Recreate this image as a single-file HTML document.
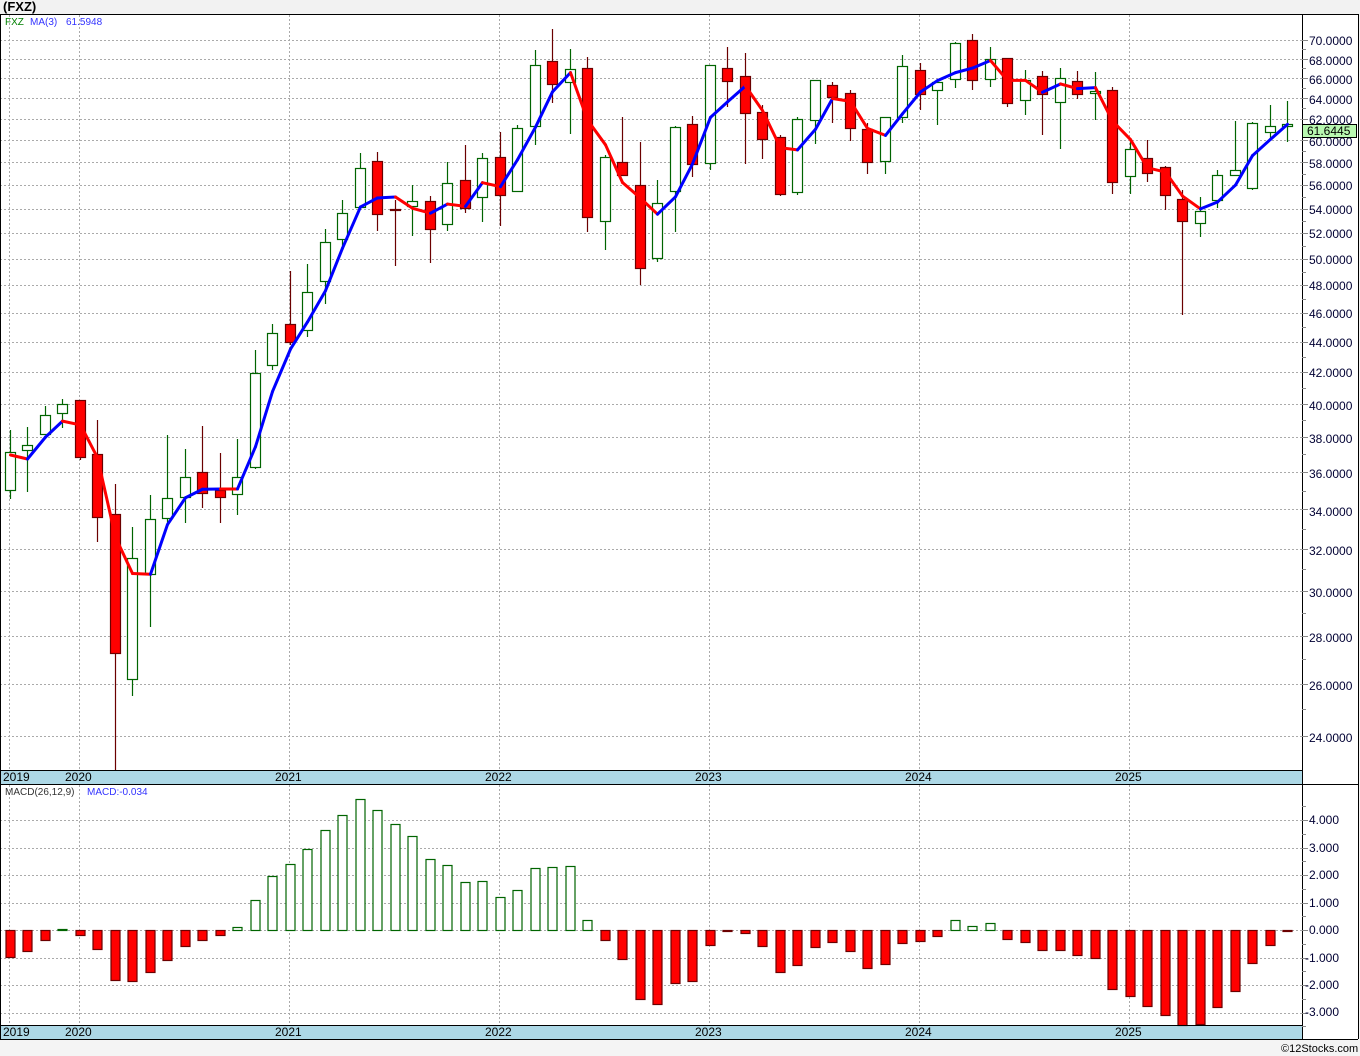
<!DOCTYPE html>
<html><head><meta charset="utf-8"><style>
html,body{margin:0;padding:0;}
body{width:1360px;height:1056px;overflow:hidden;background:#f4f4f4;font-family:"Liberation Sans","DejaVu Sans",sans-serif;}
svg{position:absolute;left:0;top:0;}
</style></head><body>
<svg id="s" width="1360" height="1056" xmlns="http://www.w3.org/2000/svg" font-family="Liberation Sans, DejaVu Sans, sans-serif">
<rect x="0" y="0" width="1360" height="14" fill="#f2f2f2"/>
<rect x="0" y="14" width="1358" height="1025" fill="#ffffff"/>
<g id="grid"></g>
<rect x="0" y="770" width="1302" height="14" fill="#add8e6"/>
<rect x="0" y="1025" width="1302" height="14" fill="#add8e6"/>
<g id="candles"></g>
<g id="ma"></g>
<g id="macd"></g>
<line x1="0" y1="14.5" x2="1358" y2="14.5" stroke="#000"/>
<line x1="0" y1="770.5" x2="1302" y2="770.5" stroke="#000"/>
<line x1="0" y1="784.5" x2="1358" y2="784.5" stroke="#000"/>
<line x1="0" y1="1025.5" x2="1302" y2="1025.5" stroke="#000"/>
<line x1="0" y1="1039.5" x2="1358" y2="1039.5" stroke="#000"/>
<line x1="1302.5" y1="14" x2="1302.5" y2="1039" stroke="#000"/>
<line x1="1358.5" y1="14" x2="1358.5" y2="1039" stroke="#000"/>
<line x1="0.5" y1="14" x2="0.5" y2="1039" stroke="#000"/>
<g id="ticks"></g>
<text x="3" y="11" font-size="13" font-weight="bold" fill="#000">(FXZ)</text>
<text x="5" y="25" font-size="10" fill="#008000">FXZ</text>
<text x="30" y="25" font-size="10" fill="#3333ff">MA(3)</text>
<text x="66" y="25" font-size="10" fill="#3333ff">61.5948</text>
<text x="5" y="795" font-size="10" fill="#333">MACD(26,12,9)</text>
<text x="87" y="795" font-size="10" fill="#3333ff">MACD:-0.034</text>
<g font-size="12" fill="#000">
<text x="3" y="781">2019</text><text x="65" y="781">2020</text><text x="275" y="781">2021</text><text x="485" y="781">2022</text><text x="695" y="781">2023</text><text x="905" y="781">2024</text><text x="1115" y="781">2025</text>
<text x="3" y="1036">2019</text><text x="65" y="1036">2020</text><text x="275" y="1036">2021</text><text x="485" y="1036">2022</text><text x="695" y="1036">2023</text><text x="905" y="1036">2024</text><text x="1115" y="1036">2025</text>
</g>
<g font-size="12" fill="#000033">
<text x="1309" y="45">70.0000</text><text x="1309" y="65">68.0000</text><text x="1309" y="84">66.0000</text><text x="1309" y="104">64.0000</text><text x="1309" y="124">62.0000</text><text x="1309" y="146">60.0000</text><text x="1309" y="168">58.0000</text><text x="1309" y="190">56.0000</text><text x="1309" y="214">54.0000</text><text x="1309" y="238">52.0000</text><text x="1309" y="264">50.0000</text><text x="1309" y="290">48.0000</text><text x="1309" y="318">46.0000</text><text x="1309" y="347">44.0000</text><text x="1309" y="377">42.0000</text><text x="1309" y="410">40.0000</text><text x="1309" y="443">38.0000</text><text x="1309" y="478">36.0000</text><text x="1309" y="516">34.0000</text><text x="1309" y="555">32.0000</text><text x="1309" y="597">30.0000</text><text x="1309" y="642">28.0000</text><text x="1309" y="690">26.0000</text><text x="1309" y="742">24.0000</text>
<text x="1309" y="824">4.000</text><text x="1309" y="852">3.000</text><text x="1309" y="879">2.000</text><text x="1309" y="907">1.000</text><text x="1309" y="934">0.000</text><text x="1305" y="962">-1.000</text><text x="1305" y="989">-2.000</text><text x="1305" y="1016">-3.000</text>
</g>
<rect x="1302.5" y="124.5" width="54" height="13" fill="#b8f8b0" stroke="#000"/>
<text x="1307" y="135" font-size="12" fill="#000">61.6445</text>
<text x="1281" y="1052" font-size="11" fill="#000">©12Stocks.com</text>
</svg>
<script>
var NS="http://www.w3.org/2000/svg";
function el(p,t,a){var e=document.createElementNS(NS,t);for(var k in a)e.setAttribute(k,a[k]);p.appendChild(e);return e;}
function Y(p){return 40+650*Math.log(70/p);}
function P(y){return 70*Math.exp(-(y-40)/650);}
var grid=document.getElementById('grid'),ticks=document.getElementById('ticks');
for(var p=24;p<=70;p+=2){var y=Math.round(Y(p))+0.5;el(grid,'line',{x1:0,y1:y,x2:1302,y2:y,stroke:'#aaa','stroke-dasharray':'2,2'});el(ticks,'line',{x1:1302,y1:y,x2:1308,y2:y,stroke:'#888'});}
for(var p=25;p<=69;p+=2){var y=Math.round(Y(p))+0.5;el(ticks,'line',{x1:1302,y1:y,x2:1306,y2:y,stroke:'#888'});}
for(var v=-3;v<=4;v++){var y=Math.round(930-27.5*v)+0.5;el(grid,'line',{x1:0,y1:y,x2:1302,y2:y,stroke:'#aaa','stroke-dasharray':'2,2'});el(ticks,'line',{x1:1302,y1:y,x2:1308,y2:y,stroke:'#888'});}
for(var v=-3.5;v<=4.5;v++){var y=Math.round(930-27.5*v)+0.5;el(ticks,'line',{x1:1302,y1:y,x2:1306,y2:y,stroke:'#888'});}
[9,79,289,499,709,919,1129].forEach(function(x){el(grid,'line',{x1:x+.5,y1:15,x2:x+.5,y2:770,stroke:'#aaa','stroke-dasharray':'2,2'});el(grid,'line',{x1:x+.5,y1:785,x2:x+.5,y2:1025,stroke:'#aaa','stroke-dasharray':'2,2'});});
// [type, bodyTop, bodyBot, wickTop, wickBot]  g=up(close=top), r=down(close=bot)
var C=[['g',452,490,430,499],['g',445,450,427,492],['g',415,434,406,434],['g',404,413,399,428],['r',400,457,400,460],['r',454,517,420,542],['r',514,653,484,770],['g',558,679,527,696],['g',519,574,495,627],['g',498,518,435,523],['g',477,497,449,523],['r',472,493,426,508],['r',490,497,453,523],['g',477,494,439,515],['g',373,467,350,469],['g',333,365,324,370],['r',324,342,271,345],['g',292,330,264,337],['g',242,281,229,304],['g',213,239,200,247],['g',168,207,153,207],['r',161,214,152,231],['r',209,210,200,266],['g',201,206,185,236],['r',201,229,196,263],['g',183,224,162,231],['r',180,208,145,213],['g',158,197,153,222],['r',157,195,132,226],['g',128,191,125,192],['g',65,126,50,145],['r',61,84,29,103],['g',69,82,49,134],['r',68,217,57,232],['g',157,221,155,250],['r',162,175,117,175],['r',185,268,142,285],['g',203,258,180,262],['g',127,191,126,232],['r',124,164,116,177],['g',65,163,65,170],['r',68,81,47,107],['r',76,113,53,164],['r',112,139,105,159],['r',137,194,135,196],['g',119,192,117,195],['g',80,120,80,144],['r',85,97,82,123],['r',93,128,90,141],['r',129,162,123,174],['g',117,161,117,174],['g',66,117,55,123],['r',70,94,63,110],['g',82,90,82,125],['g',43,79,42,88],['r',40,80,34,90],['g',59,79,47,87],['r',58,103,58,107],['g',80,100,70,115],['r',76,94,71,135],['g',78,102,68,149],['r',81,94,71,99],['g',91,93,72,120],['r',90,182,87,194],['g',149,176,140,194],['r',158,173,140,182],['r',167,195,166,210],['r',199,221,190,315],['g',211,223,197,237],['g',175,200,170,208],['g',170,175,121,175],['g',123,188,122,190],['g',126,132,105,138],['g',124,126,101,142]];
var M=[957,951,940,929,935,949,980,981,972,960,946,940,935,927,900,876,864,849,830,815,799,810,824,836,859,865,882,881,897,890,868,867,866,920,940,959,999,1004,983,981,945,930,933,946,972,965,947,942,951,968,964,943,941,936,920,926,923,939,942,950,950,955,958,989,996,1006,1015,1025,1024,1007,991,963,945,931];
var cg=document.getElementById('candles'),mg=document.getElementById('macd'),ag=document.getElementById('ma');
function X(i){return Math.round(9.5+i*17.5);}
var closes=[];
C.forEach(function(c,i){var x=X(i)+.5;var up=c[0]=='g';var sc=up?'#006400':'#6b0000';
el(cg,'line',{x1:x,y1:c[3],x2:x,y2:c[4],stroke:sc,'stroke-width':1.2});
var h=Math.max(1,c[2]-c[1]);
el(cg,'rect',{x:x-5,y:c[1]+.5,width:10,height:h,fill:up?'#fff':'#ff0000',stroke:sc,'stroke-width':1.2});
closes.push(P(up?c[1]:c[2]));
var m=M[i];var green=(m<930);var t=Math.min(m,930),hh=Math.max(1,Math.abs(m-930));
el(mg,'rect',{x:x-4.5,y:t+.5,width:9,height:hh,fill:green?'#fff':'#ff0000',stroke:green?'#006400':'#6b0000','stroke-width':1.2});
});
var ma=[455,459];
for(var i=2;i<C.length;i++){ma.push(Y((closes[i]+closes[i-1]+closes[i-2])/3));}
for(var i=1;i<ma.length;i++){el(ag,'line',{x1:X(i-1)+.5,y1:ma[i-1],x2:X(i)+.5,y2:ma[i],stroke:ma[i]<ma[i-1]?'#0000ff':'#ff0000','stroke-width':3,'stroke-linecap':'round'});}
</script>
</body></html>
